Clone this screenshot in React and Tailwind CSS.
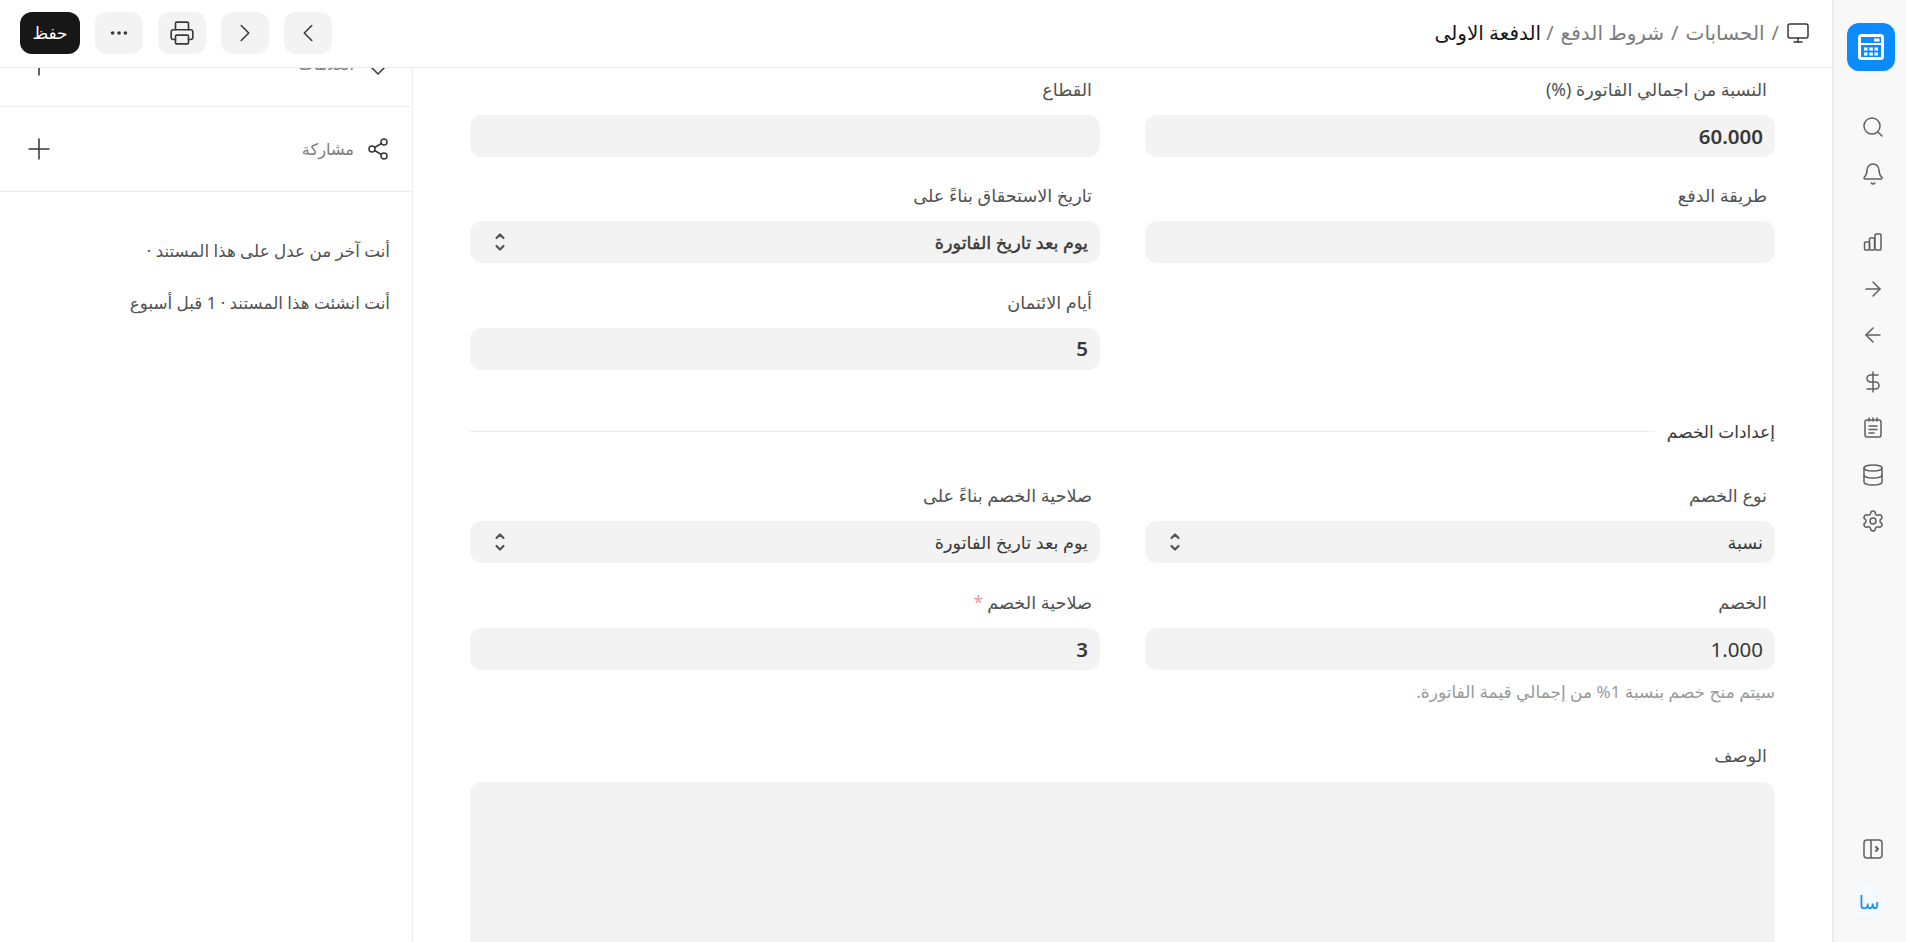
import { ChevronLeft, ChevronRight, ArrowLeft, ArrowRight, Bell, Database, DollarSign, Ellipsis, Monitor, Plus, Printer, Search, Settings, Share2 } from 'lucide-react';

function Updown() {
  return (
    <svg width="12" height="22" viewBox="0 0 12 22" fill="none" stroke="#525252" strokeWidth="2.200" strokeLinecap="round" strokeLinejoin="round">
      <path d="M2.500 7L6 3.500 9.500 7" />
      <path d="M2.500 15L6 18.500 9.500 15" />
    </svg>
  );
}

function Field({ label, value, bold, num, select, required }) {
  return (
    <div>
      <div className="h-5 mb-[14px] px-2 text-[17.7px] leading-[16px] text-[#525252] whitespace-nowrap">
        {label}
        {required && <span className="text-[#e79a9a] mr-1">*</span>}
      </div>
      <div className={`h-[42px] rounded-xl bg-[#f3f3f3] flex items-center justify-between pr-[12px] pl-[24px] text-[#383838] ${num ? 'text-[20.5px]' : 'text-[17.7px]'} ${bold && num ? 'font-semibold' : ''} ${bold && !num ? '[-webkit-text-stroke:0.4px_#383838]' : ''}`}>
        <span>{value}</span>
        {select && <Updown />}
      </div>
    </div>
  );
}

function RailButton({ children }) {
  return <div className="h-[46.5px] flex items-center justify-center text-[#5f5f5f]">{children}</div>;
}

function TopButton({ children }) {
  return <div className="w-12 h-[42px] rounded-xl bg-[#f3f3f3] flex items-center justify-center text-[#383838]">{children}</div>;
}

export default function App() {
  return (
    <div dir="rtl" className="h-[942px] w-[1906px] overflow-hidden flex bg-white font-['Noto_Sans','DejaVu_Sans',sans-serif]">
      {/* icon rail */}
      <aside className="w-[74px] shrink-0 bg-[#f8f8f8] border-l-2 border-[#ededed] flex flex-col items-center pt-[23px] pl-[6px]">
        <div className="w-12 h-12 rounded-xl bg-[#0a8cff] flex items-center justify-center mr-[4px]">
          <svg width="28" height="28" viewBox="0 0 28 28" fill="none">
            <rect x="1" y="1" width="26" height="26" rx="3.500" fill="#fff" />
            <rect x="4" y="4" width="20" height="6" fill="#0a8cff" />
            <rect x="17" y="5.500" width="5.500" height="3" fill="#fff" />
            <rect x="4" y="12" width="20" height="12" fill="#0a8cff" />
            <path d="M7 14.500h3.500v3H7zM12.300 14.500h3.500v3h-3.500zM17.500 14.500H21v3h-3.500zM7 19.500h3.500v3H7zM12.300 19.500h3.500v3h-3.500zM17.500 19.500H21v3h-3.500z" fill="#fff" />
          </svg>
        </div>
        <div className="mt-[33px] w-full">
          <RailButton><Search size={24} strokeWidth={1.5} /></RailButton>
          <RailButton><Bell size={24} strokeWidth={1.5} /></RailButton>
        </div>
        <div className="mt-[22px] w-full">
          <RailButton>
            <svg width="20" height="20" viewBox="0 0 20 20" fill="none" stroke="currentColor" strokeWidth="1.500" strokeLinejoin="round">
              <rect x="1.500" y="10" width="5" height="8" rx="1" />
              <rect x="6.500" y="6" width="5" height="12" rx="1" />
              <rect x="12" y="2" width="6" height="16" rx="1" />
            </svg>
          </RailButton>
          <RailButton><ArrowRight size={24} strokeWidth={1.5} /></RailButton>
          <RailButton><ArrowLeft size={24} strokeWidth={1.5} /></RailButton>
          <RailButton><DollarSign size={24} strokeWidth={1.5} /></RailButton>
          <RailButton>
            <svg width="20" height="22" viewBox="0 0 20 22" fill="none" stroke="currentColor" strokeWidth="1.500" strokeLinecap="round" strokeLinejoin="round">
              <rect x="2" y="3" width="16" height="17" rx="2" />
              <path d="M6 1v3M10 1v3M14 1v3M6 9h8M6 12.500h8M6 16h5" />
            </svg>
          </RailButton>
          <RailButton><Database size={24} strokeWidth={1.5} /></RailButton>
          <RailButton><Settings size={24} strokeWidth={1.5} /></RailButton>
        </div>
        <div className="mt-auto flex flex-col items-center pb-6">
          <svg width="20" height="20" viewBox="0 0 20 20" fill="none" stroke="#5f5f5f" strokeWidth="1.500" strokeLinejoin="round">
            <rect x="1" y="1" width="18" height="18" rx="3" />
            <path d="M8 1v18" />
            <path d="M12.500 7.500l2.500 2.500-2.500 2.500" strokeWidth="2" />
          </svg>
          <div className="mt-[27px] w-8 h-8 rounded-full bg-[#f5faff] text-[#0a8cff] flex items-center justify-center text-[18px] -ml-[8px]">سا</div>
        </div>
      </aside>

      <div className="flex-1 min-w-0 flex flex-col">
        {/* top bar */}
        <header className="h-[68px] shrink-0 border-b border-[#ededed] flex items-center justify-between pr-[22px] pl-5">
          <div className="flex items-center gap-[7px] text-[20px] leading-[28px] text-[#7c7c7c] -mt-[2px]">
            <Monitor size={24} strokeWidth={1.5} className="text-[#383838]" />
            <span>/</span>
            <span>الحسابات</span>
            <span>/</span>
            <span>شروط الدفع</span>
            <span>/</span>
            <span className="text-[#171717] -mr-[2px]">الدفعة الاولى</span>
          </div>
          <div className="flex items-center gap-[15px] -mt-[1px]">
            <TopButton><ChevronLeft size={30} strokeWidth={1.25} /></TopButton>
            <TopButton><ChevronRight size={30} strokeWidth={1.25} /></TopButton>
            <TopButton><Printer size={26} strokeWidth={1.5} /></TopButton>
            <TopButton><Ellipsis size={22} strokeWidth={2} /></TopButton>
            <div className="w-[60px] h-[42px] rounded-xl bg-[#171717] text-white flex items-center justify-center text-[17px] font-medium">حفظ</div>
          </div>
        </header>

        <div className="flex-1 min-h-0 flex">
          {/* form */}
          <main className="flex-1 min-w-0 overflow-hidden pr-[57px] pl-[57px] pt-[13px]">
            <div className="grid grid-cols-2 gap-x-[45px] gap-y-[30.4px]">
              <Field label="النسبة من اجمالي الفاتورة (%)" value="60.000" bold num />
              <Field label="القطاع" />
              <Field label="طريقة الدفع" />
              <Field label="تاريخ الاستحقاق بناءً على" value="يوم بعد تاريخ الفاتورة" bold select />
              <div />
              <Field label="أيام الائتمان" value="5" bold num />
            </div>

            <div className="mt-[50px] h-6 flex items-center gap-3 text-[17px] text-[#383838]">
              <span>إعدادات الخصم</span>
              <div className="flex-1 border-t border-[#ededed]" />
            </div>

            <div className="mt-[43.7px] grid grid-cols-2 gap-x-[45px] gap-y-[31px]">
              <Field label="نوع الخصم" value="نسبة" select />
              <Field label="صلاحية الخصم بناءً على" value="يوم بعد تاريخ الفاتورة" select />
              <Field label="الخصم" value="1.000" num />
              <Field label="صلاحية الخصم" value="3" bold num required />
            </div>

            <div className="mt-[12px] h-5 leading-5 text-[17px] text-[#999999]">سيتم منح خصم بنسبة 1% من إجمالي قيمة الفاتورة.</div>

            <div className="mt-[45px] h-5 mb-[15px] px-2 text-[17.7px] leading-[16px] text-[#525252]">الوصف</div>
            <div className="h-[300px] rounded-xl bg-[#f3f3f3]" />
          </main>

          {/* document sidebar */}
          <aside className="w-[413px] shrink-0 border-r border-[#ededed] overflow-hidden">
            <div className="-mt-[45px]">
              <div className="h-[84px] border-b border-[#ededed] flex items-center justify-between pr-[22px] pl-[22px] text-[#7c7c7c]">
                <div className="flex items-center gap-[12px]">
                  <svg width="24" height="24" viewBox="0 0 24 24" fill="none" stroke="#383838" strokeWidth="1.500" strokeLinejoin="round">
                    <path d="M12 2l10 10-10 10L2 12z" />
                  </svg>
                  <span className="text-[16.200px]">العلامات</span>
                </div>
                <Plus size={34} strokeWidth={1.1} className="text-[#383838]" />
              </div>
              <div className="h-[85px] border-b border-[#ededed] flex items-center justify-between pr-[22px] pl-[22px] text-[#7c7c7c]">
                <div className="flex items-center gap-[12px]">
                  <Share2 size={24} strokeWidth={1.5} className="text-[#383838]" />
                  <span className="text-[16.200px]">مشاركة</span>
                </div>
                <Plus size={34} strokeWidth={1.1} className="text-[#383838]" />
              </div>
            </div>
            <div className="pt-[47px] pr-[22px] text-[16.800px] text-[#525252] leading-6 space-y-[28px]">
              <div>أنت آخر من عدل على هذا المستند ·</div>
              <div>أنت انشئت هذا المستند · 1 قبل أسبوع</div>
            </div>
          </aside>
        </div>
      </div>
    </div>
  );
}
